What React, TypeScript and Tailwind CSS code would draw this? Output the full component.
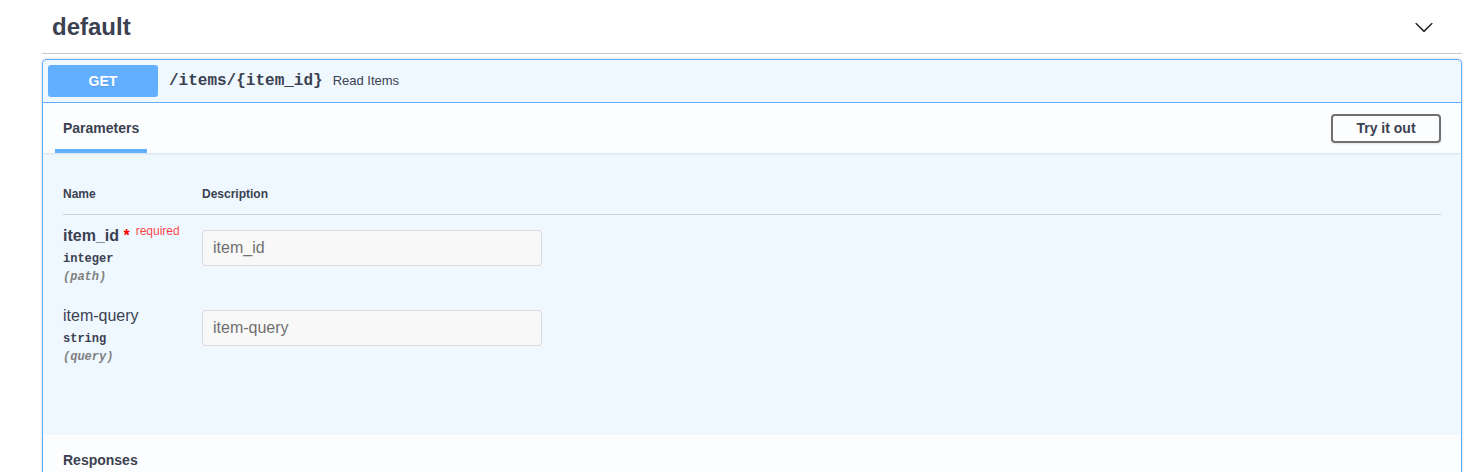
const SANS = { fontFamily: '"Liberation Sans", Arial, sans-serif' }
const MONO = { fontFamily: '"Liberation Mono", "Courier New", monospace' }

const params = [
  { name: 'item_id', type: 'integer', where: 'path', required: true },
  { name: 'item-query', type: 'string', where: 'query', required: false },
]

function Chevron() {
  return (
    <svg viewBox="0 0 20 20" className="h-5 w-5" fill="#222">
      <path d="M17.418 6.109c.272-.268.709-.268.979 0s.271.701 0 .969l-7.908 7.83c-.27.268-.707.268-.979 0l-7.908-7.83c-.27-.268-.27-.701 0-.969.271-.268.709-.268.979 0L10 13.25l7.418-7.141z" />
    </svg>
  )
}

export default function App() {
  return (
    <div className="h-[472px] w-[1472px] overflow-hidden bg-white pl-[42px] pr-[10px] text-[#3b4151]" style={SANS}>
      <div className="flex h-[54px] items-center justify-between border-b border-[#c4c6cb] pl-[10px] pr-[28px]">
        <h3 className="text-[24px] font-bold leading-[28px]">default</h3>
        <Chevron />
      </div>

      <div className="mt-[5px] rounded-[4px] border border-[#61affe] bg-[rgba(97,175,254,0.1)] shadow-[0_0_3px_rgba(0,0,0,0.19)]">
        <div className="flex items-center p-[5px]">
          <span className="flex h-[32px] w-[110px] items-center justify-center rounded-[3px] bg-[#61affe] text-[14px] font-bold text-white [text-shadow:0_1px_0_rgba(0,0,0,0.1)]">
            GET
          </span>
          <span className="ml-[11px] text-[16px] font-bold" style={MONO}>
            /items/{'{item_id}'}
          </span>
          <span className="ml-[10px] text-[13px]">Read Items</span>
        </div>

        <div className="border-t border-[#61affe]">
          <div className="flex h-[50px] items-center justify-between bg-white/80 px-[20px] shadow-[0_1px_2px_rgba(0,0,0,0.1)]">
            <div className="relative flex self-stretch items-center">
              <h4 className="text-[14px] font-bold">Parameters</h4>
              <span className="absolute bottom-0 left-[-8px] h-[4px] w-[92px] bg-[#61affe]" />
            </div>
            <button className="h-[29px] w-[110px] rounded-[4px] border-2 border-[#707070] text-[14px] font-bold shadow-[0_1px_2px_rgba(0,0,0,0.1)]">
              Try it out
            </button>
          </div>

          <div className="px-[20px] pb-[60px] pt-[20px]">
            <div className="flex border-b border-[rgba(59,65,81,0.2)] pb-[11px] pt-[13px] text-[12px] font-bold leading-[17px]">
              <div className="w-[139px]">Name</div>
              <div>Description</div>
            </div>

            {params.map((p) => (
              <div key={p.name} className="flex py-[10px]">
                <div className="w-[139px]">
                  <div className={`h-[21px] text-[16px] leading-[21px] ${p.required ? 'font-bold' : ''}`}>
                    {p.name}
                    {p.required && (
                      <>
                        <span className="leading-none text-[#ff0000]">&nbsp;*</span>
                        <span className="relative top-[-6px] px-[6px] text-[12px] font-normal leading-none text-[rgba(255,0,0,0.75)]">
                          required
                        </span>
                      </>
                    )}
                  </div>
                  <div className="mt-[6px] text-[12px] font-bold leading-[15px]" style={MONO}>
                    {p.type}
                  </div>
                  <div className="mt-[3px] text-[12px] font-bold italic leading-[15px] text-[#808080]" style={MONO}>
                    ({p.where})
                  </div>
                </div>
                <div>
                  <input
                    disabled
                    placeholder={p.name}
                    className="mt-[5px] h-[36px] w-[340px] rounded-[4px] border border-[#d9d9d9] bg-[#f8f8f8] px-[10px] text-[16px] placeholder:text-[#707070]"
                  />
                </div>
              </div>
            ))}
          </div>

          <div className="flex h-[50px] items-center bg-white/80 px-[20px] shadow-[0_1px_2px_rgba(0,0,0,0.1)]">
            <h4 className="text-[14px] font-bold">Responses</h4>
          </div>
          <div className="h-[40px]" />
        </div>
      </div>
    </div>
  )
}
